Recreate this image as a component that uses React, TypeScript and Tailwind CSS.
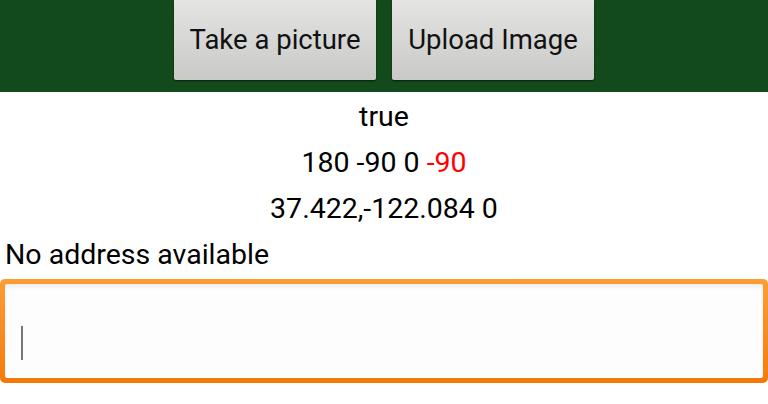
export default function App() {
  return (
    <div className="w-[768px] h-[404px] bg-white font-['Roboto',sans-serif] text-black overflow-hidden">
      <div className="h-[92px] bg-[#134a1c] flex justify-center items-start gap-[16px]">
        <button className="w-[202px] h-[80px] bg-gradient-to-b from-[#e4e5e3] to-[#c9cac8] text-[27.5px] text-[#111] rounded-b-[2px] shadow-[0_1px_2px_rgba(0,0,0,0.6)]">
          Take a picture
        </button>
        <button className="w-[202px] h-[80px] bg-gradient-to-b from-[#e4e5e3] to-[#c9cac8] text-[27.5px] text-[#111] rounded-b-[2px] shadow-[0_1px_2px_rgba(0,0,0,0.6)]">
          Upload Image
        </button>
      </div>
      <div className="text-[28.5px] leading-[46px] pt-[2px]">
        <div className="text-center">true</div>
        <div className="text-center">
          180 -90 0 <span className="text-[#ff0000]">-90</span>
        </div>
        <div className="text-center">37.422,-122.084 0</div>
        <div className="pl-[5px]">No address available</div>
      </div>
      <div className="mt-[1px] h-[104px] p-[5px] rounded-[5px] bg-gradient-to-b from-[#fb9e33] to-[#f47a06]">
        <div className="h-full rounded-[2px] bg-[#fdfdfd] shadow-[inset_0_3px_4px_rgba(0,0,0,0.06)] flex items-center pl-[16px] pt-[24px]">
          <div className="w-[2px] h-[34px] bg-[#777]" />
        </div>
      </div>
    </div>
  );
}
